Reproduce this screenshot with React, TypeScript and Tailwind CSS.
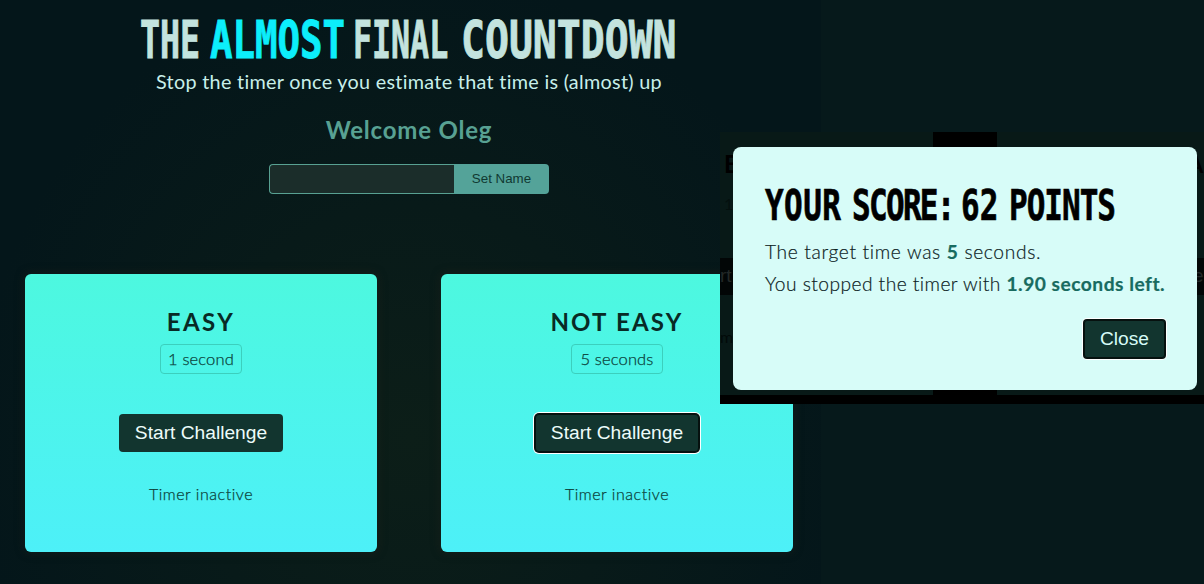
import React from "react";

type Challenge = { title: string; titleClass: string; target: string; targetClass: string; focused: boolean };

const challenges: Challenge[] = [
  { title: "EASY", titleClass: "tracking-[2.4px]", target: "1 second", targetClass: "w-[82px]", focused: false },
  { title: "NOT EASY", titleClass: "tracking-[2.2px]", target: "5 seconds", targetClass: "w-[92px]", focused: true },
];

function ChallengeCard({ title, titleClass, target, targetClass, focused }: Challenge) {
  return (
    <section className="flex h-[278px] w-[352px] flex-col items-center rounded-md bg-linear-to-b from-[#4df8df] to-[#4df0f8] pt-8 shadow-[0_0_8px_2px_rgba(35,34,26,0.35)]">
      <h2 className={`h-8 whitespace-nowrap text-[24px] leading-8 font-bold text-[#082a25] ${titleClass}`}>{title}</h2>
      <p className={`mt-1.5 h-[30px] rounded border border-[#3ccfbd] text-center text-[16.5px] leading-[29px] font-light tracking-[0.15px] whitespace-nowrap text-[#0b3f39] [-webkit-text-stroke:0.25px_#0b3f39] ${targetClass}`}>
        {target}
      </p>
      <button
        className={`mt-10 h-[38px] w-[164px] rounded bg-[#12352f] font-['Liberation_Sans',sans-serif] text-[19.2px] whitespace-nowrap text-[#edfcfa] ${focused ? "shadow-[inset_0_0_0_1px_#06110f,0_0_0_1px_#06110f,0_0_0_2px_#ffffff]" : ""}`}
      >
        Start Challenge
      </button>
      <p className="mt-[30px] text-[16px] leading-[23px] font-light tracking-[0.55px] text-[#0b3f39] [-webkit-text-stroke:0.25px_#0b3f39]">Timer inactive</p>
    </section>
  );
}

function ResultDialog() {
  return (
    <div className="absolute top-[132px] left-[720px] h-[272px] w-[484px] overflow-hidden bg-[#081917]">
      <div className="absolute top-0 left-[213px] h-[272px] w-16 bg-black" />
      <div className="absolute top-[126px] left-0 h-[37px] w-full bg-[#020606]" />
      <div className="absolute bottom-0 left-0 h-[9px] w-full bg-black" />
      <span className="absolute top-[14px] left-1 text-[24px] font-bold text-black">E</span>
      <span className="absolute top-[60px] left-1 text-base text-[#04100e]">1</span>
      <span className="absolute top-[130px] left-0 font-['Liberation_Sans',sans-serif] text-[19px] text-[#222827]">rt</span>
      <span className="absolute top-[193px] left-0 text-base text-[#020a09]">m</span>
      <span className="absolute top-[16px] left-[468px] text-[22px] font-bold text-black">A</span>
      <span className="absolute top-[130px] left-[473px] font-['Liberation_Sans',sans-serif] text-[19px] text-[#222827]">e</span>
      <div role="dialog" className="absolute top-[15px] left-[13px] flex h-[243px] w-[464px] flex-col rounded-lg bg-[#d7fcf8] pt-8 pr-[31px] pl-8">
        <h2 className="flex h-[54px] origin-top scale-y-[1.38] items-start font-['DejaVu_Sans_Mono',monospace] text-[31px] leading-[39px] font-bold whitespace-nowrap text-black [-webkit-text-stroke:0.5px_black]">
          <span className="w-[87px] tracking-[0.4px]">YOUR</span>
          <span className="w-[109px] tracking-[-1.7px]">SCORE:</span>
          <span className="w-12">62</span>
          <span className="tracking-[-1px]">POINTS</span>
        </h2>
        <p className="mt-[3px] text-[19.2px] leading-8 font-light tracking-[0.65px] whitespace-nowrap text-[#0c221f] [-webkit-text-stroke:0.2px_currentColor]">
          The target time was <strong className="font-bold text-[#186b60]">5</strong> seconds.
        </p>
        <p className="text-[19.2px] leading-8 font-light tracking-[0.45px] whitespace-nowrap text-[#0c221f] [-webkit-text-stroke:0.2px_currentColor]">
          You stopped the timer with <strong className="font-bold tracking-[0.5px] text-[#186b60]">1.90 seconds left.</strong>
        </p>
        <button className="mt-5 mr-px h-[38px] w-[81px] self-end rounded-[3px] bg-[#12352f] font-['Liberation_Sans',sans-serif] text-[19.2px] text-[#d7fcf8] shadow-[inset_0_0_0_1px_#06110f,0_0_0_1px_#06110f,0_0_0_2px_#ffffff]">
          Close
        </button>
      </div>
    </div>
  );
}

export default function App() {
  return (
    <main className="relative h-[584px] w-[1204px] overflow-hidden bg-[#06191b] font-[Lato,sans-serif]">
      <div className="flex h-[584px] w-[821px] flex-col items-center bg-[radial-gradient(ellipse_at_50%_75%,#0c1e18_0%,#04161a_75%)] pr-[3px]">
        <header className="flex w-[538px] flex-col items-center pt-3.5">
          <h1 className="flex h-[53px] w-full origin-top scale-y-[1.5] font-['DejaVu_Sans_Mono',monospace] text-[34px] leading-[35px] font-bold whitespace-nowrap text-[#c3e3de] [-webkit-text-stroke:0.6px_currentColor]">
            <span className="w-[70px] origin-left scale-x-[0.98]">THE</span>
            <span className="w-[143px] origin-left scale-x-[1.1] text-[#0ceefb]">ALMOST</span>
            <span className="w-[108px] origin-left scale-x-[0.93]">FINAL</span>
            <span className="origin-left scale-x-[1.17]">COUNTDOWN</span>
          </h1>
          <p className="text-[19.8px] leading-7 tracking-[0.3px] whitespace-nowrap text-[#c8efea]">Stop the timer once you estimate that time is (almost) up</p>
        </header>
        <h2 className="mt-[19px] text-[24px] leading-[31px] font-bold tracking-[0.8px] whitespace-nowrap text-[#58a192]">Welcome Oleg</h2>
        <div className="mt-[19px] flex h-[30px] w-[280px]">
          <input aria-label="Name" className="h-full w-[185px] rounded-l border border-r-0 border-[#58a192] bg-[#1b2d2a] px-2 outline-none" />
          <button className="h-full w-[95px] rounded-r bg-[#54a399] font-['Liberation_Sans',sans-serif] text-[13.33px] text-[#103932]">Set Name</button>
        </div>
        <div className="mt-20 flex gap-16">
          {challenges.map((challenge) => (
            <ChallengeCard key={challenge.title} {...challenge} />
          ))}
        </div>
      </div>
      <ResultDialog />
    </main>
  );
}
